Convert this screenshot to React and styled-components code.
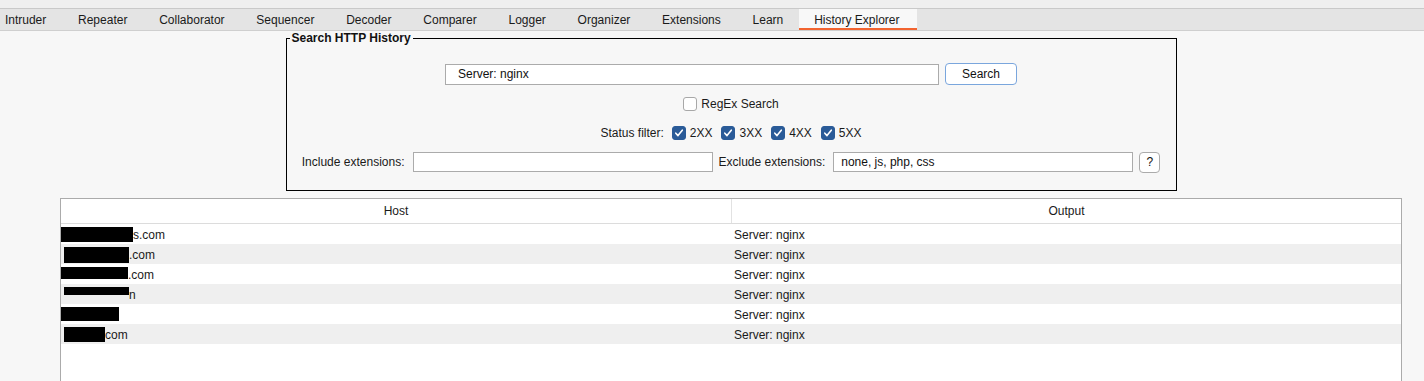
import React from 'react'
import styled, { createGlobalStyle } from 'styled-components'

const GlobalStyle = createGlobalStyle`
    html, body {
        margin: 0;
        padding: 0;
        background: #f7f7f7;
        font-family: "Liberation Sans", Arial, sans-serif;
        font-size: 12px;
        color: #1a1a1a;
    }
`

const tabs = ['Intruder', 'Repeater', 'Collaborator', 'Sequencer', 'Decoder', 'Comparer', 'Logger', 'Organizer', 'Extensions', 'Learn', 'History Explorer']

const rows = [
    { box: 72, h: 15, off: 0, rest: 's.com' },
    { box: 65, h: 16, off: 3, rest: '.com' },
    { box: 67, h: 12, off: 0, rest: '.com' },
    { box: 65, h: 8, off: 3, rest: 'n' },
    { box: 58, h: 14, off: 0, rest: '' },
    { box: 41, h: 15, off: 3, rest: 'com' },
]

const Page = styled.div`
    width: 1424px;
    height: 381px;
    overflow: hidden;
`

const TopStrip = styled.div`
    height: 8px;
    background: #efefef;
    border-bottom: 1px solid #c9c9c9;
`

const TabBar = styled.div`
    display: flex;
    height: 21px;
    background: #e4e4e4;
    border-bottom: 1px solid #cfcfcf;
`

const Tab = styled.div`
    display: flex;
    align-items: center;
    margin-left: ${p => p.first ? '-11px' : '0'};
    background: ${p => p.active ? '#f8f8f8' : 'transparent'};
    box-shadow: ${p => p.active ? 'inset 0 -2px 0 #f26430' : 'none'};
    padding-right: ${p => p.active ? '17px' : '15.9px'};
    padding-left: ${p => p.active ? '15px' : '15.9px'};
    white-space: nowrap;
`

const Content = styled.div`
    margin-left: 60px;
    width: 1342px;
    display: flex;
    flex-direction: column;
    align-items: center;
`

const GroupBox = styled.fieldset`
    width: 891px;
    box-sizing: border-box;
    margin: 0;
    border: 1px solid #000;
    padding: 14px 0 13px;
    display: flex;
    flex-direction: column;
    align-items: center;
`

const Legend = styled.legend`
    font-weight: bold;
    font-size: 12px;
    line-height: 14px;
    margin-left: 3px;
    padding: 0 2px;
    color: #111;
`

const Row = styled.div`
    display: flex;
    align-items: center;
    height: ${p => p.h || 29}px;
`

const TextInput = styled.div`
    width: ${p => p.w}px;
    height: ${p => p.h || 20}px;
    box-sizing: border-box;
    background: #fff;
    border: 1px solid #ababab;
    display: flex;
    align-items: center;
    padding-left: ${p => p.pad || 6}px;
    margin-right: ${p => p.mr || 0}px;
    color: #111;
`

const Button = styled.div`
    width: ${p => p.w}px;
    height: ${p => p.h}px;
    box-sizing: border-box;
    background: #fff;
    border: 1px solid ${p => p.focus ? '#7aa6dd' : '#ababab'};
    border-radius: 4px;
    display: flex;
    align-items: center;
    justify-content: center;
    color: #111;
`

const Label = styled.span`
    margin-right: ${p => p.mr || 0}px;
    white-space: nowrap;
`

const Box = styled.span`
    width: 14px;
    height: 14px;
    box-sizing: border-box;
    border-radius: 3px;
    border: 1px solid ${p => p.checked ? '#2a5b98' : '#a8a8a8'};
    background: ${p => p.checked ? '#2a5b98' : '#fff'};
    display: inline-flex;
    align-items: center;
    justify-content: center;
    margin-right: 4px;
`

const CheckItem = styled.span`
    display: flex;
    align-items: center;
    margin-right: ${p => p.mr || 0}px;
`

function Check({ checked, label, mr }) {
    return (
        <CheckItem mr={mr}>
            <Box checked={checked}>
                {checked && (
                    <svg width="10" height="10" viewBox="0 0 10 10">
                        <path d="M1.8 5.2 L4 7.6 L8.3 2.2" fill="none" stroke="#fff" strokeWidth="1.6" strokeLinecap="round" strokeLinejoin="round" />
                    </svg>
                )}
            </Box>
            {label}
        </CheckItem>
    )
}

const Table = styled.div`
    margin-top: 7px;
    width: 1342px;
    height: 190px;
    box-sizing: border-box;
    background: #fff;
    border: 1px solid #ababab;
    border-bottom: none;
`

const HeaderRow = styled.div`
    display: grid;
    grid-template-columns: 670px 1fr;
    height: 24px;
    border-bottom: 1px solid #dcdcdc;
`

const HeaderCell = styled.div`
    display: flex;
    align-items: center;
    justify-content: center;
    border-left: ${p => p.divider ? '1px solid #e2e2e2' : 'none'};
`

const BodyRow = styled.div`
    display: grid;
    grid-template-columns: 671px 1fr;
    height: 20px;
    background: ${p => p.odd ? '#efefef' : '#fff'};
`

const Cell = styled.div`
    display: flex;
    align-items: center;
    padding-top: 2px;
    box-sizing: border-box;
    padding-left: ${p => p.pad || 0}px;
    white-space: nowrap;
`

const Redact = styled.span`
    align-self: flex-start;
    margin-top: 1px;
    margin-left: ${p => p.off}px;
    width: ${p => p.w}px;
    height: ${p => p.h}px;
    background: #000;
`

export default function App() {
    return (
        <Page>
            <GlobalStyle />
            <TopStrip />
            <TabBar>
                {tabs.map((t, i) => (
                    <Tab key={t} first={i === 0} active={t === 'History Explorer'}>{t}</Tab>
                ))}
            </TabBar>
            <Content>
                <GroupBox>
                    <Legend>Search HTTP History</Legend>
                    <Row h={30}>
                        <TextInput w={494} h={21} pad={12} mr={6}>Server: nginx</TextInput>
                        <Button w={72} h={22} focus>Search</Button>
                    </Row>
                    <Row>
                        <Check label="RegEx Search" />
                    </Row>
                    <Row>
                        <Label mr={8}>Status filter:</Label>
                        <Check checked label="2XX" mr={9} />
                        <Check checked label="3XX" mr={9} />
                        <Check checked label="4XX" mr={9} />
                        <Check checked label="5XX" />
                    </Row>
                    <Row h={30}>
                        <Label mr={8}>Include extensions:</Label>
                        <TextInput w={300} mr={6} />
                        <Label mr={8}>Exclude extensions:</Label>
                        <TextInput w={300} pad={7} mr={6}>none, js, php, css</TextInput>
                        <Button w={21} h={21}>?</Button>
                    </Row>
                </GroupBox>
                <Table>
                    <HeaderRow>
                        <HeaderCell>Host</HeaderCell>
                        <HeaderCell divider>Output</HeaderCell>
                    </HeaderRow>
                    {rows.map((r, i) => (
                        <BodyRow key={i} odd={i % 2 === 1}>
                            <Cell>
                                <Redact w={r.box} h={r.h} off={r.off} />
                                {r.rest}
                            </Cell>
                            <Cell pad={2}>Server: nginx</Cell>
                        </BodyRow>
                    ))}
                </Table>
            </Content>
        </Page>
    )
}
